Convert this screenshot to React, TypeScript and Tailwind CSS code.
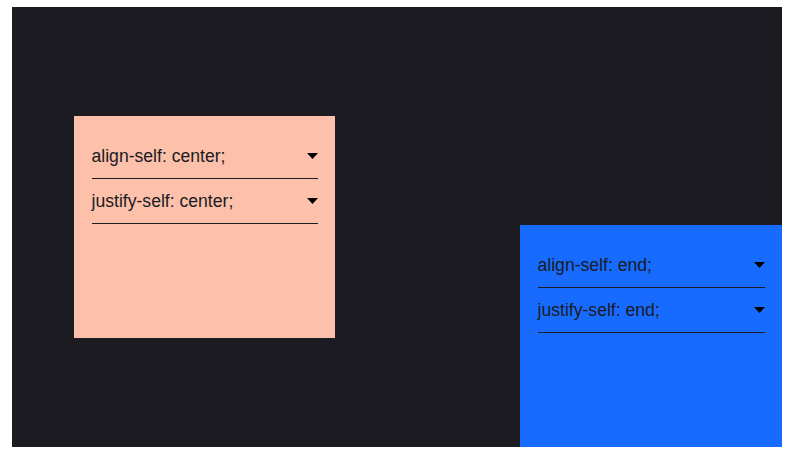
function Caret() {
  return (
    <svg width="11" height="6" viewBox="0 0 11 6" className="shrink-0">
      <polygon points="0,0 11,0 5.5,6" fill="#000" />
    </svg>
  )
}

function Row({ label }: { label: string }) {
  return (
    <div className="flex h-[45px] items-center justify-between border-b border-[#1b1b22]">
      <span>{label}</span>
      <Caret />
    </div>
  )
}

function Box({ align, justify, tone }: { align: string; justify: string; tone: string }) {
  return (
    <div className={`${tone} flex h-[222px] flex-col px-[17.5px] pt-[18px]`}>
      <Row label={`align-self: ${align};`} />
      <Row label={`justify-self: ${justify};`} />
    </div>
  )
}

export default function App() {
  return (
    <div className="h-[459px] w-[795px] bg-white pl-[12px] pt-[7px] font-['Liberation_Sans',Arial,sans-serif] text-[17.6px] text-[#1b1b22]">
      <div className="grid h-[440px] w-[770px] grid-cols-2 bg-[#1c1b22]">
        <div className="self-center justify-self-center">
          <Box align="center" justify="center" tone="w-[261px] bg-[#fdc0ab]" />
        </div>
        <div className="self-end justify-self-end">
          <Box align="end" justify="end" tone="w-[262px] bg-[#176bff]" />
        </div>
      </div>
    </div>
  )
}
